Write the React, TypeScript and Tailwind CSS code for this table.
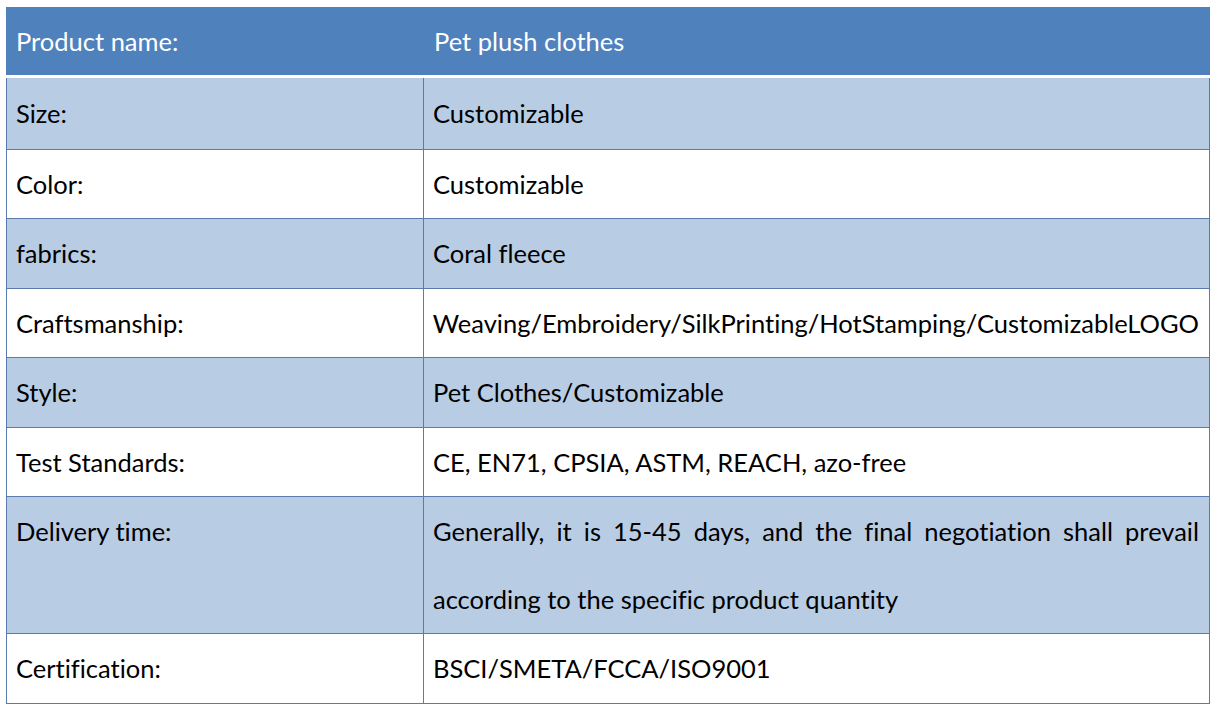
import React from "react";

const rows: { k: string; v: string; h: string; light: boolean }[] = [
  { k: "Size:", v: "Customizable", h: "h-[72px]", light: true },
  { k: "Color:", v: "Customizable", h: "h-[69px]", light: false },
  { k: "fabrics:", v: "Coral fleece", h: "h-[70px]", light: true },
  { k: "Craftsmanship:", v: "Weaving/Embroidery/SilkPrinting/HotStamping/CustomizableLOGO", h: "h-[69px]", light: false },
  { k: "Style:", v: "Pet Clothes/Customizable", h: "h-[70px]", light: true },
  { k: "Test Standards:", v: "CE, EN71, CPSIA, ASTM, REACH, azo-free", h: "h-[69px]", light: false },
];

export default function App() {
  return (
    <div
      className="w-[1218px] h-[716px] bg-white pt-[7px] pl-[6px] text-black [font-variant-ligatures:none]"
      style={{ fontFamily: "Lato, 'Open Sans', sans-serif" }}
    >
      <div className="w-[1204px] text-[25.5px]">
        <div className="flex h-[71px] bg-[#4f81bd] text-white border-b-[3px] border-white">
          <div className="w-[418px] pl-[10px] flex items-center">Product name:</div>
          <div className="flex-1 pl-[10px] flex items-center">Pet plush clothes</div>
        </div>
        {rows.map((r) => (
          <div
            key={r.k}
            className={`flex ${r.h} box-border border-x border-b border-[#5b7aae] ${r.light ? "bg-[#b8cce4]" : "bg-white"}`}
          >
            <div className="w-[417px] pl-[9px] flex items-center border-r border-[#5b7aae]">{r.k}</div>
            <div className="flex-1 pl-[9px] pr-[10px] flex items-center whitespace-nowrap">{r.v}</div>
          </div>
        ))}
        <div className="flex h-[137px] box-border border-x border-b border-[#5b7aae] bg-[#b8cce4]">
          <div className="w-[417px] pl-[9px] pt-[15px] border-r border-[#5b7aae]">Delivery time:</div>
          <div className="flex-1 pl-[9px] pr-[10px] flex flex-col justify-center">
            <div className="h-[68px] flex items-center w-full">
              <span className="w-full text-justify [text-align-last:justify]">
                Generally, it is 15-45 days, and the final negotiation shall prevail
              </span>
            </div>
            <div className="h-[68px] flex items-center">according to the specific product quantity</div>
          </div>
        </div>
        <div className="flex h-[70px] box-border border-x border-b border-[#5b7aae] bg-white">
          <div className="w-[417px] pl-[9px] flex items-center border-r border-[#5b7aae]">Certification:</div>
          <div className="flex-1 pl-[9px] pr-[10px] flex items-center">BSCI/SMETA/FCCA/ISO9001</div>
        </div>
      </div>
    </div>
  );
}
